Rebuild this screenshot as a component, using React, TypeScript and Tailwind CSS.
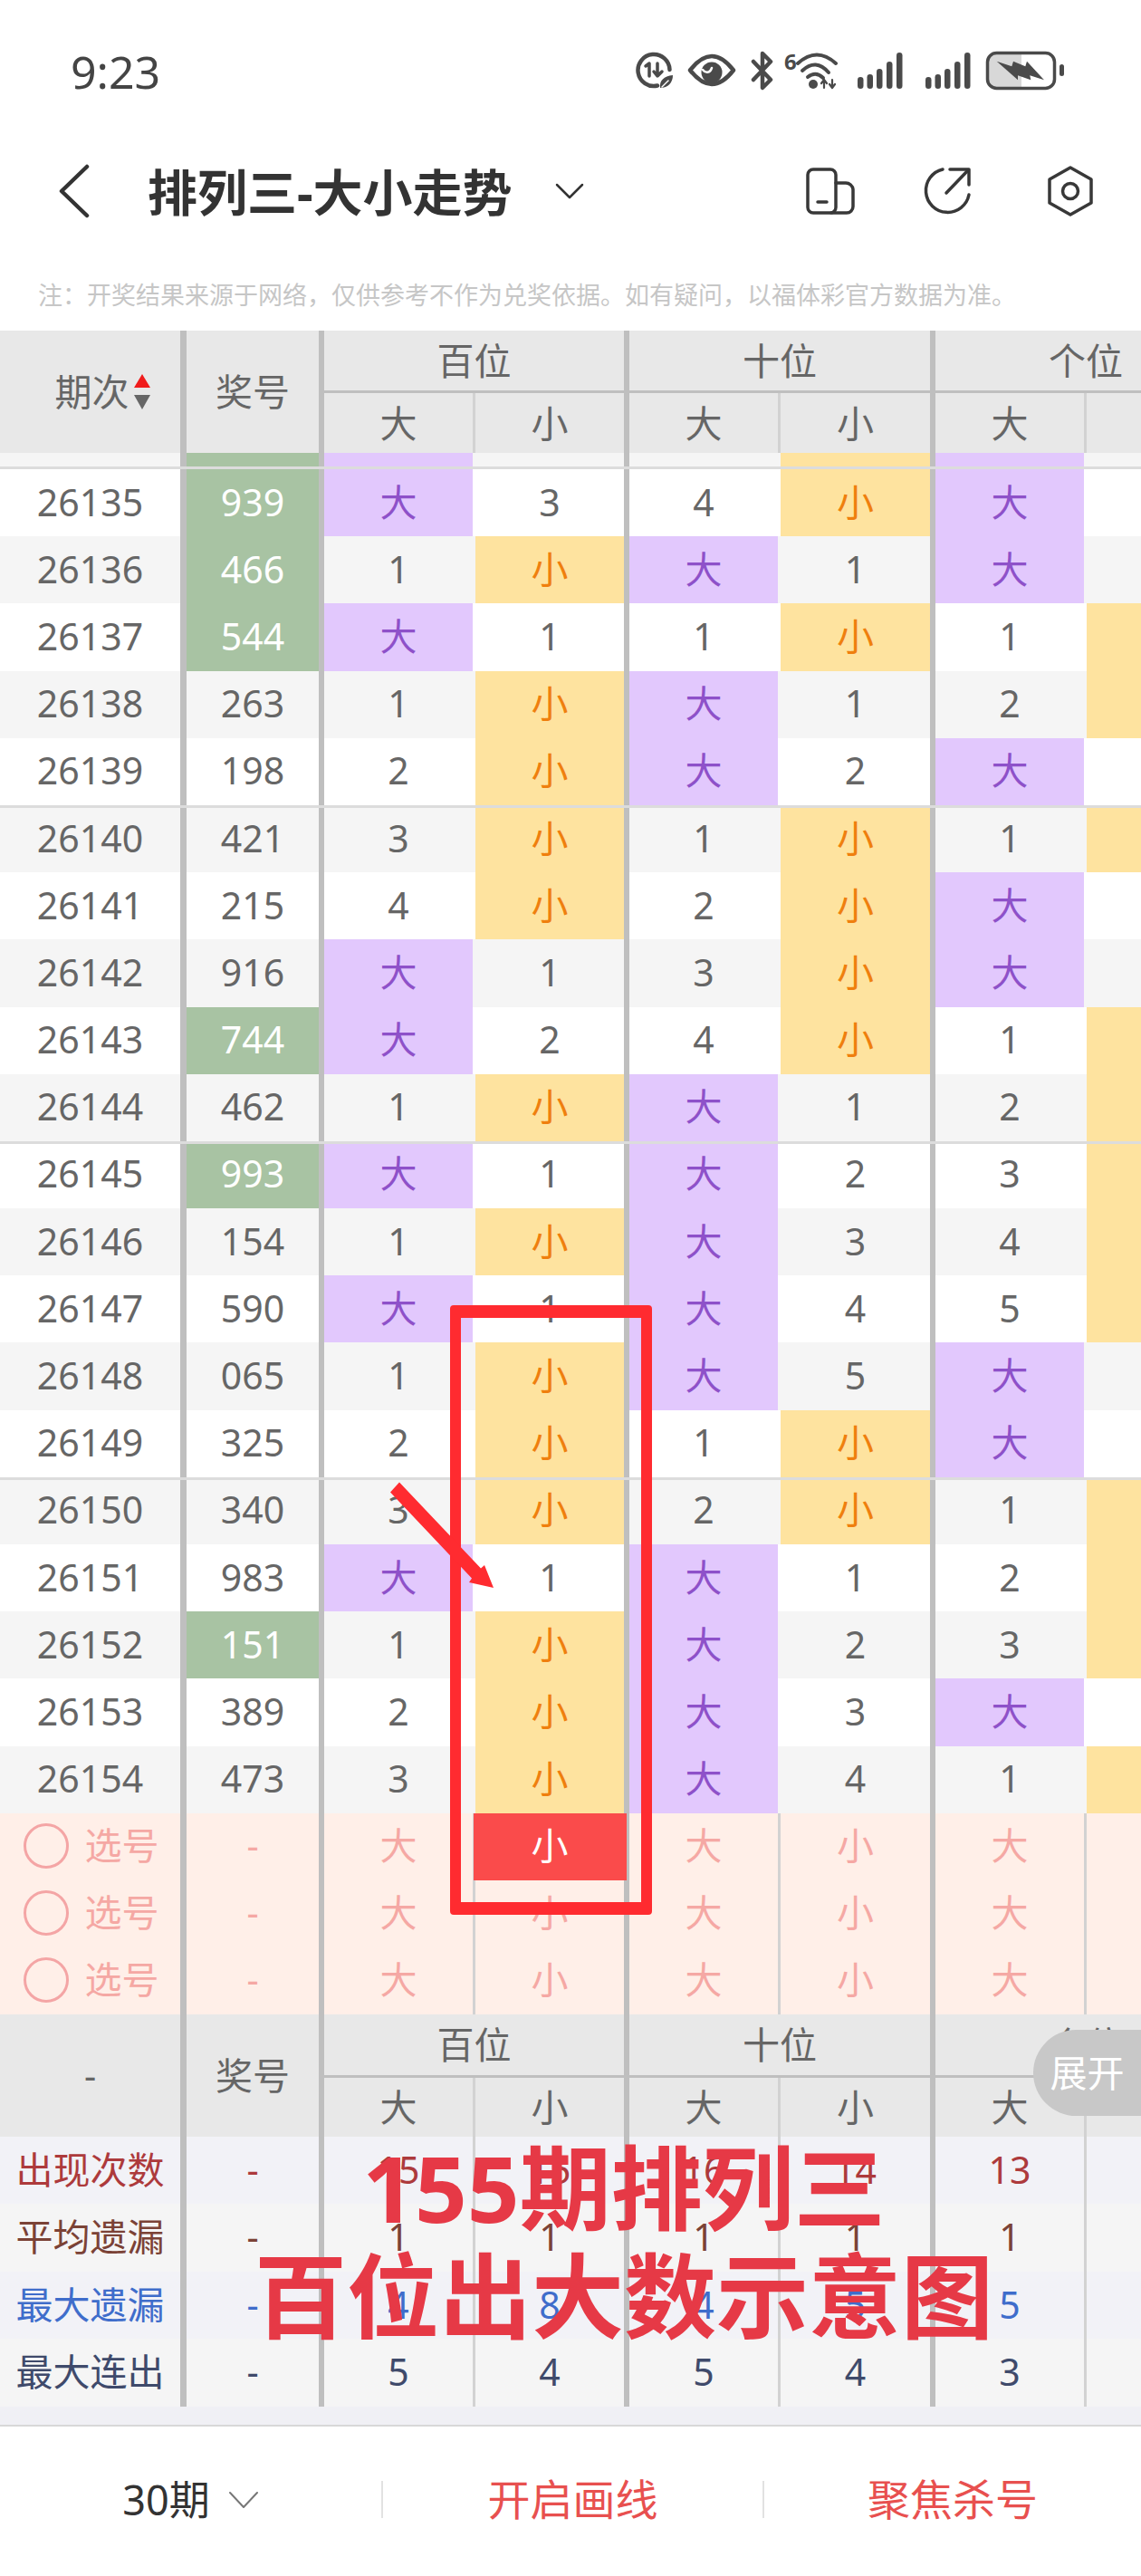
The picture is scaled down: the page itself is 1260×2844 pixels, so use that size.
import type { ReactNode } from 'react';

type Row = {
  issue: string;
  num: string;
  hit: boolean;
  cells: string[];
  last: boolean;
};

const raw: [string, string, boolean, string, boolean][] = [
  ['26135', '939', true, '大 3 4 小 大', false],
  ['26136', '466', true, '1 小 大 1 大', false],
  ['26137', '544', true, '大 1 1 小 1', true],
  ['26138', '263', false, '1 小 大 1 2', true],
  ['26139', '198', false, '2 小 大 2 大', false],
  ['26140', '421', false, '3 小 1 小 1', true],
  ['26141', '215', false, '4 小 2 小 大', false],
  ['26142', '916', false, '大 1 3 小 大', false],
  ['26143', '744', true, '大 2 4 小 1', true],
  ['26144', '462', false, '1 小 大 1 2', true],
  ['26145', '993', true, '大 1 大 2 3', true],
  ['26146', '154', false, '1 小 大 3 4', true],
  ['26147', '590', false, '大 1 大 4 5', true],
  ['26148', '065', false, '1 小 大 5 大', false],
  ['26149', '325', false, '2 小 1 小 大', false],
  ['26150', '340', false, '3 小 2 小 1', true],
  ['26151', '983', false, '大 1 大 1 2', true],
  ['26152', '151', true, '1 小 大 2 3', true],
  ['26153', '389', false, '2 小 大 3 大', false],
  ['26154', '473', false, '3 小 大 4 1', true],
];

const rows: Row[] = raw.map(([issue, num, hit, cells, last]) => ({
  issue,
  num,
  hit,
  cells: cells.split(' '),
  last,
}));

const NOTE =
  '注\uFF1A开奖结果来源于网络\uFF0C仅供参考不作为兑奖依据。如有疑问\uFF0C以福体彩官方数据为准。';

// column boxes, the right border is the grey rule between columns
const C0 = 'w-[206px] border-r-[7px] border-[#bfbfbf] shrink-0 h-full flex items-center justify-center';
const C1 = 'w-[152px] border-r-[6px] border-[#bfbfbf] shrink-0 h-full flex items-center justify-center';
const dataCols = [
  'w-[167px] border-r-[3px] border-transparent',
  'w-[170px] border-r-[6px] border-[#bfbfbf]',
  'w-[167px] border-r-[3px] border-transparent',
  'w-[171px] border-r-[6px] border-[#bfbfbf]',
  'w-[167px] border-r-[3px] border-transparent',
];
const lineCols = [
  'w-[167px] border-r-[3px] border-[#d2d2d2]',
  'w-[170px] border-r-[6px] border-[#bfbfbf]',
  'w-[167px] border-r-[3px] border-[#d2d2d2]',
  'w-[171px] border-r-[6px] border-[#bfbfbf]',
  'w-[167px] border-r-[3px] border-[#d2d2d2]',
];
const cellBase = 'shrink-0 h-full flex items-center justify-center bg-clip-padding';

function DataRow({ row, index }: { row: Row; index: number }) {
  const grouped = index % 5 === 0 && index > 0;
  // the group rule sits inside the row, text stays where it would be without it
  const pad = grouped ? 'pb-[5px]' : 'pb-[2px]';
  return (
    <div
      className={`h-[74.2px] flex box-border text-[#666666] ${index % 2 === 0 ? 'bg-white' : 'bg-[#f5f5f5]'} ${
        grouped ? 'border-t-[3px] border-[#dcdcdc]' : ''
      }`}
    >
      <div className={`${C0} ${pad}`}>{row.issue}</div>
      <div className={`${C1} ${pad} ${row.hit ? 'bg-[#a8c3a3] text-white bg-clip-padding' : ''}`}>{row.num}</div>
      {row.cells.map((v, i) => (
        <div
          key={i}
          className={`${cellBase} ${pad} ${dataCols[i]} ${
            v === '大' ? 'bg-[#e2c8fd] text-[#8e51c9]' : v === '小' ? 'bg-[#fee39f] text-[#ef7f0e]' : ''
          }`}
        >
          {v}
        </div>
      ))}
      <div className={`flex-1 h-full ${row.last ? 'bg-[#fee39f]' : ''}`} />
    </div>
  );
}

function PickRow({ active }: { active?: boolean }) {
  return (
    <div className="h-[74px] flex bg-[#ffefe8] text-[#f5a8a4]">
      <div className={`${C0} gap-[18px] pl-[2px] pb-[2px]`}>
        <span className="w-[50px] h-[50px] rounded-full border-[3px] border-[#f4a5a5]" />
        <span>选号</span>
      </div>
      <div className={`${C1} pb-[2px]`}>-</div>
      {['大', '小', '大', '小', '大'].map((v, i) => (
        <div key={i} className={`${cellBase} relative pb-[2px] ${lineCols[i]}`}>
          {active && i === 1 ? (
            <>
              <span className="absolute -left-[2px] -right-[3px] inset-y-0 bg-[#fa4b4b]" />
              <span className="relative text-white">{v}</span>
            </>
          ) : (
            v
          )}
        </div>
      ))}
      <div className="flex-1" />
    </div>
  );
}

function TableHeader({ first, tall }: { first: ReactNode; tall?: boolean }) {
  const topH = tall ? 'h-[66px]' : 'h-[67px]';
  const subH = tall ? 'h-[66px]' : 'h-[65px]';
  return (
    <div className="h-[135px] flex bg-[#e8e8e8] text-[#666666]">
      <div className={C0}>{first}</div>
      <div className={C1}>奖号</div>
      <div className="flex-1 min-w-0 overflow-hidden">
        <div className="flex w-[842px]">
          <div className={`w-[337px] border-r-[6px] border-[#bfbfbf] ${topH} flex items-center justify-center`}>百位</div>
          <div className={`w-[338px] border-r-[6px] border-[#bfbfbf] ${topH} flex items-center justify-center`}>十位</div>
          <div className="w-[167px]">
            <div className={`${topH} w-[332px] flex items-center justify-center`}>个位</div>
          </div>
        </div>
        <div className="h-[3px] bg-[#bfbfbf]" />
        <div className={`flex ${subH}`}>
          {['大', '小', '大', '小', '大'].map((v, i) => (
            <div key={i} className={`${cellBase} ${lineCols[i]}`}>
              {v}
            </div>
          ))}
        </div>
      </div>
    </div>
  );
}

const stats = [
  { label: '出现次数', bg: 'bg-[#f2f2f7]', text: 'text-[#ad3a3c]', values: ['15', '15', '16', '14', '13'] },
  { label: '平均遗漏', bg: 'bg-[#f5f5f5]', text: 'text-[#7b4236]', values: ['1', '1', '1', '1', '1'] },
  { label: '最大遗漏', bg: 'bg-[#f2f2f7]', text: 'text-[#3f6dcb]', values: ['4', '8', '4', '5', '5'] },
  { label: '最大连出', bg: 'bg-[#f5f5f5]', text: 'text-[#3f4a6b]', values: ['5', '4', '5', '4', '3'] },
];

function BackIcon() {
  return (
    <svg width="36" height="60" viewBox="0 0 36 60" fill="none" stroke="#333333" strokeWidth="4.5" strokeLinecap="round" strokeLinejoin="round">
      <path d="M32 3 L4 30 L32 57" />
    </svg>
  );
}

function Signal({ className }: { className: string }) {
  return (
    <svg className={className} width="51" height="44" viewBox="0 0 51 44" fill="#4a4a4a">
      <rect x="1" y="29" width="6.5" height="13" rx="3.25" />
      <rect x="11.5" y="26" width="6.5" height="16" rx="3.25" />
      <rect x="22" y="20" width="6.5" height="22" rx="3.25" />
      <rect x="33" y="12" width="6.5" height="30" rx="3.25" />
      <rect x="44" y="2" width="6.5" height="40" rx="3.25" />
    </svg>
  );
}

function StatusIcons() {
  return (
    <div className="ml-auto mb-[2px] flex items-center">
      <svg width="42" height="44" viewBox="0 0 42 44" fill="none" stroke="#4a4a4a" strokeWidth="4.5" strokeLinecap="round" strokeLinejoin="round">
        <path d="M24 38.5 A17.5 17.5 0 1 1 37.5 21" />
        <path d="M11 17 L15 14 V28" strokeWidth="3.5" />
        <path d="M24 14 V27 M20 23 L24 28 L29 23" strokeWidth="3.5" />
        <path d="M27 41 C26 33 31 28 41 27 C41 35 36 41 27 41 Z" fill="#4a4a4a" stroke="none" />
        <path d="M29 40 L36 33" stroke="#ffffff" strokeWidth="1.5" />
      </svg>
      <svg className="ml-[15px]" width="55" height="44" viewBox="0 0 55 44" fill="none" stroke="#4a4a4a" strokeWidth="4.5">
        <path d="M3 21.5 C12 10 20 6 27 6 C34 6 42 10 51 21.5 C42 33 34 37 27 37 C20 37 12 33 3 21.5 Z" strokeLinejoin="round" />
        <circle cx="27" cy="24" r="11.5" fill="#4a4a4a" stroke="none" />
        <path d="M17 21 C20 25 25 25 27 19" stroke="#ffffff" strokeWidth="2.5" strokeLinecap="round" />
      </svg>
      <svg className="ml-[15px]" width="26" height="44" viewBox="0 0 26 44" fill="none" stroke="#4a4a4a" strokeWidth="4.5" strokeLinejoin="round" strokeLinecap="round">
        <path d="M3 12 L22 32 L13 41 V3 L22 12 L3 32" />
      </svg>
      <div className="ml-[10px] relative w-[60px] h-[44px]">
        <span className="absolute left-[1px] top-0 text-[24px] leading-[24px] font-bold text-[#4a4a4a]">6</span>
        <svg className="absolute inset-0" width="60" height="44" viewBox="0 0 60 44" fill="none" stroke="#4a4a4a" strokeWidth="4" strokeLinecap="round" strokeLinejoin="round">
          <path d="M16 14 Q37 -5 58 14" />
          <path d="M21 22 Q36 8 50 24" />
          <path d="M27 29 Q36 22 44 30" />
          <circle cx="33" cy="37" r="5" fill="#4a4a4a" stroke="none" />
          <path d="M45 32 V41 M42 36 L45 32 L48 36 M54 32 V41 M51 37 L54 41 L57 37" strokeWidth="2.2" />
        </svg>
      </div>
      <Signal className="ml-[21px]" />
      <Signal className="ml-[24px]" />
      <svg className="ml-[16px]" width="88" height="44" viewBox="0 0 88 44" fill="none">
        <rect x="2.5" y="2.5" width="74" height="39" rx="10" fill="#ffffff" />
        <path d="M12 2.5 H40 V41.5 H12 A9.5 9.5 0 0 1 2.5 32 V12 A9.5 9.5 0 0 1 12 2.5 Z" fill="#d8d8d8" />
        <rect x="2.5" y="2.5" width="74" height="39" rx="10" stroke="#4a4a4a" strokeWidth="3.5" />
        <path d="M12.7 11.7 L29.3 17.3 L31 11.7 L44.3 17.3 L46 11.7 L65 32.3 L49.3 27.3 L50.3 32.3 L36 27.3 L36 32.3 Z" fill="#4a4a4a" />
        <rect x="82" y="15" width="5" height="13" rx="2.5" fill="#4a4a4a" />
      </svg>
    </div>
  );
}

export default function App() {
  return (
    <div className="relative w-[1260px] h-[2844px] overflow-hidden bg-white text-[41px] leading-none font-['Noto_Sans','Noto_Sans_CJK_SC',sans-serif]">
      {/* status bar */}
      <div className="h-[158px] flex items-center pl-[78px] pr-[84px]">
        <span className="text-[50px] text-[#444444]">9:23</span>
        <StatusIcons />
      </div>

      {/* nav */}
      <div className="h-[106px] flex items-center pl-[64px] pr-[52px]">
        <BackIcon />
        <span className="ml-[63px] text-[55px] font-bold text-[#333333]">排列三-大小走势</span>
        <svg className="ml-[47px]" width="32" height="18" viewBox="0 0 32 18" fill="none" stroke="#333333" strokeWidth="2.5" strokeLinecap="round" strokeLinejoin="round">
          <path d="M2 2 L16 16 L30 2" />
        </svg>
        <svg className="ml-auto" width="54" height="52" viewBox="0 0 54 52" fill="none" stroke="#383838" strokeWidth="3.5" strokeLinejoin="round" strokeLinecap="round">
          <rect x="2" y="2" width="31" height="48" rx="6" />
          <path d="M33 17 H44 A8 8 0 0 1 52 24 V43 A7 7 0 0 1 45 50 H28" />
          <path d="M13 38 H23" />
        </svg>
        <svg className="ml-[75px]" width="56" height="54" viewBox="0 0 56 54" fill="none" stroke="#383838" strokeWidth="3.5" strokeLinecap="round" strokeLinejoin="round">
          <path d="M22 3 A24 24 0 1 0 51 31" />
          <path d="M30 3 H51 V20" />
          <path d="M50 4 L26 29" />
        </svg>
        <svg className="ml-[81px]" width="52" height="56" viewBox="0 0 52 56" fill="none" stroke="#383838" strokeWidth="3.5" strokeLinejoin="round">
          <path d="M26 2 L49 15 V41 L26 54 L3 41 V15 Z" />
          <circle cx="26" cy="28" r="8.5" />
        </svg>
      </div>

      {/* note */}
      <div className="h-[101px] pl-[42px] pt-[48px] text-[27px] text-[#c6c6c6]">{NOTE}</div>

      {/* table */}
      <TableHeader
        tall
        first={
          <span className="flex items-center gap-[4px] pl-[28px]">
            期次
            <svg width="20" height="40" viewBox="0 0 20 40">
              <path d="M10 0 L19 15 H1 Z" fill="#f01c1c" />
              <path d="M1 23 H19 L10 39 Z" fill="#666666" />
            </svg>
          </span>
        }
      />

      {/* row cut off by the sticky header */}
      <div className="h-[15px] flex bg-[#f5f5f5]">
        <div className={C0} />
        <div className={`${C1} bg-[#a8c3a3] bg-clip-padding`} />
        <div className={`${cellBase} ${dataCols[0]} bg-[#e2c8fd]`} />
        <div className={`${cellBase} ${dataCols[1]}`} />
        <div className={`${cellBase} ${dataCols[2]}`} />
        <div className={`${cellBase} ${dataCols[3]} bg-[#fee39f]`} />
        <div className={`${cellBase} ${dataCols[4]} bg-[#e2c8fd]`} />
        <div className="flex-1" />
      </div>
      <div className="h-[3px] bg-[#dcdcdc]" />

      {rows.map((row, i) => (
        <DataRow key={row.issue} row={row} index={i} />
      ))}

      <PickRow active />
      <PickRow />
      <PickRow />

      <TableHeader first="-" />

      {stats.map((s) => (
        <div key={s.label} className={`h-[74.5px] flex ${s.bg} ${s.text}`}>
          <div className={`${C0} pb-[2px]`}>{s.label}</div>
          <div className={`${C1} pb-[2px]`}>-</div>
          {s.values.map((v, i) => (
            <div key={i} className={`${cellBase} pb-[2px] ${lineCols[i]}`}>
              {v}
            </div>
          ))}
          <div className="flex-1" />
        </div>
      ))}

      <div className="h-[20px] bg-[#f0f0f5] border-b-2 border-[#d8d8d8] box-content" />

      {/* bottom bar */}
      <div className="h-[162px] flex items-center">
        <div className="w-[421px] h-[41px] flex items-center justify-center gap-[20px] text-[45px] text-[#333333]">
          30期
          <svg width="34" height="20" viewBox="0 0 34 20" fill="none" stroke="#777777" strokeWidth="2" strokeLinecap="round" strokeLinejoin="round">
            <path d="M2 2 L17 18 L32 2" />
          </svg>
        </div>
        <div className="w-[421px] h-[41px] border-l-2 border-[#e2e2e2] flex items-center justify-center text-[47px] text-[#e8504f]">
          开启画线
        </div>
        <div className="flex-1 h-[41px] border-l-2 border-[#e2e2e2] flex items-center justify-center text-[47px] text-[#e8504f]">
          聚焦杀号
        </div>
      </div>

      {/* 展开 pill */}
      <div className="absolute left-[1141px] top-[2241px] w-[119px] h-[95px] rounded-l-[48px] bg-[#c8c8c8] text-white flex items-center justify-center">
        展开
      </div>

      {/* red annotations drawn over the screenshot */}
      <div className="absolute left-[497px] top-[1441px] w-[223px] h-[673px] border-x-[12px] border-y-[14px] border-[#ff2b30] rounded-[4px]" />
      <svg className="absolute left-[425px] top-[1630px]" width="130" height="130" viewBox="0 0 130 130" fill="#ff2b30">
        <path d="M6 17.5 L16 6.5 L106 101.5 L110 98 L120 123 L93 117 L96 112.5 Z" />
      </svg>
      <div className="absolute left-[189px] top-[2355px] w-[1000px] flex flex-col items-center leading-[120px] font-bold text-[#e63946]">
        <span className="text-[101px]">155期排列三</span>
        <span className="text-[102px]">百位出大数示意图</span>
      </div>
    </div>
  );
}
